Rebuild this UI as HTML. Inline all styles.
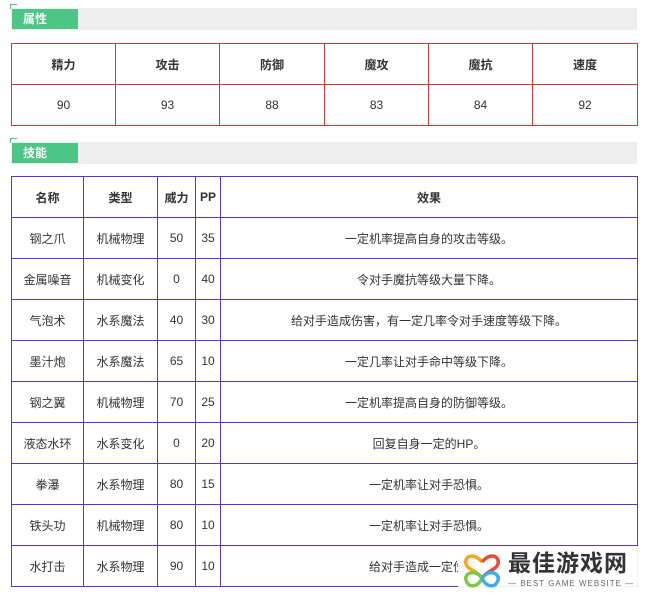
<!DOCTYPE html>
<html><head><meta charset="utf-8"><style>
body{margin:0;background:#fff;width:647px;height:595px;overflow:hidden;position:relative;font-family:"Liberation Sans","Noto Sans CJK SC",sans-serif;font-size:12px;color:#333}
.bar{position:absolute;left:11px;width:626px;height:22px;background:#eeeeee}
.tab{position:absolute;left:1px;top:1px;width:66px;height:20px;background:#4cc684;color:#fff;font-weight:bold;font-size:12px;line-height:20px;padding-left:11px;box-sizing:border-box}
.corner{position:absolute;left:-1px;top:-4px;width:6px;height:4px;border-left:1px solid #4cc684;border-top:1px solid #4cc684}
table{position:absolute;left:11px;border-collapse:collapse;table-layout:fixed}
td{text-align:center;padding:0;box-sizing:border-box}
.t1 td{border:1px solid #e03434}
.t2 td{border:1px solid #5533dd;height:41px}
.h td{font-weight:bold}
</style></head><body>
<div class="bar" style="top:8px"><div class="corner"></div><div class="tab">属性</div></div>
<table class="t1" style="top:43px;width:626px">
<colgroup><col style="width:104px"><col style="width:104px"><col style="width:105px"><col style="width:104px"><col style="width:104px"><col style="width:105px"></colgroup>
<tr class="h" style="height:41px"><td>精力</td><td>攻击</td><td>防御</td><td>魔攻</td><td>魔抗</td><td>速度</td></tr>
<tr style="height:41px"><td>90</td><td>93</td><td>88</td><td>83</td><td>84</td><td>92</td></tr>
</table>
<div class="bar" style="top:142px"><div class="corner"></div><div class="tab">技能</div></div>
<table class="t2" style="top:176px;width:626px">
<colgroup><col style="width:72px"><col style="width:74px"><col style="width:38px"><col style="width:25px"><col style="width:417px"></colgroup>
<tr class="h"><td>名称</td><td>类型</td><td>威力</td><td>PP</td><td>效果</td></tr>
<tr><td>钢之爪</td><td>机械物理</td><td>50</td><td>35</td><td>一定机率提高自身的攻击等级。</td></tr>
<tr><td>金属噪音</td><td>机械变化</td><td>0</td><td>40</td><td>令对手魔抗等级大量下降。</td></tr>
<tr><td>气泡术</td><td>水系魔法</td><td>40</td><td>30</td><td>给对手造成伤害，有一定几率令对手速度等级下降。</td></tr>
<tr><td>墨汁炮</td><td>水系魔法</td><td>65</td><td>10</td><td>一定几率让对手命中等级下降。</td></tr>
<tr><td>钢之翼</td><td>机械物理</td><td>70</td><td>25</td><td>一定机率提高自身的防御等级。</td></tr>
<tr><td>液态水环</td><td>水系变化</td><td>0</td><td>20</td><td>回复自身一定的HP。</td></tr>
<tr><td>拳瀑</td><td>水系物理</td><td>80</td><td>15</td><td>一定机率让对手恐惧。</td></tr>
<tr><td>铁头功</td><td>机械物理</td><td>80</td><td>10</td><td>一定机率让对手恐惧。</td></tr>
<tr><td>水打击</td><td>水系物理</td><td>90</td><td>10</td><td>给对手造成一定伤害。</td></tr>
</table>
<div style="position:absolute;left:458px;top:546px;width:185px;height:48px;background:rgba(255,255,255,0.92)">
<svg width="44" height="44" viewBox="0 0 44 44" style="position:absolute;left:2px;top:2px" fill="none" stroke-width="3.5">
<path d="M22 14 C14 4 4 8 6 16 C8 22 16 22 22 30" stroke="#f5a623"/>
<path d="M22 14 C30 4 40 8 38 16 C36 22 28 22 22 30" stroke="#e94b3c"/>
<path d="M22 30 C14 20 4 26 6 32 C8 40 18 40 22 30" stroke="#7ac943"/>
<path d="M22 30 C30 20 40 26 38 32 C36 40 26 40 22 30" stroke="#3fa9f5"/>
</svg>
<div style="position:absolute;left:50px;top:4px;font-size:23px;font-weight:bold;color:#333;letter-spacing:1px;line-height:26px">最佳游戏网</div>
<div style="position:absolute;left:50px;top:33px;font-size:8px;color:#666;letter-spacing:1px;white-space:nowrap">— BEST GAME WEBSITE —</div>
</div>
</body></html>
